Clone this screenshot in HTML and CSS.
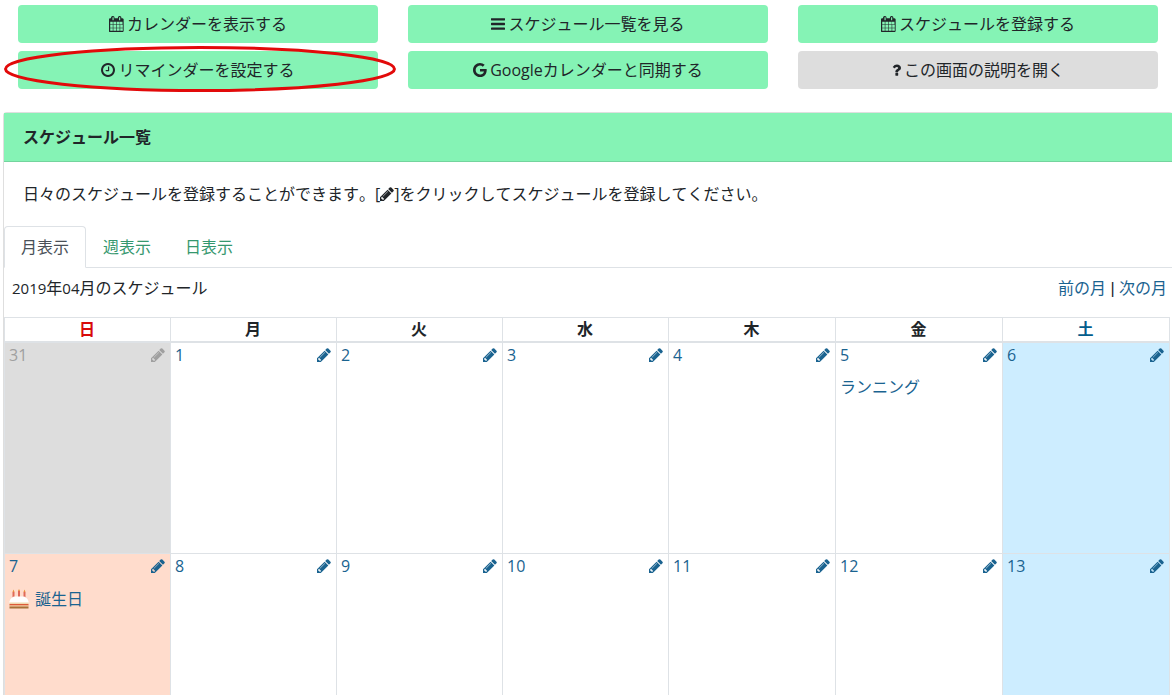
FILE: index.html
```html
<!DOCTYPE html>
<html lang="ja">
<head>
<meta charset="utf-8">
<title>スケジュール一覧</title>
<link rel="stylesheet" href="styles.css">
</head>
<body>
<svg class="defs" width="0" height="0" aria-hidden="true">
  <symbol id="i-cal" viewBox="0 0 1664 1792"><path d="M128 1664h288v-288h-288v288zm352 0h320v-288h-320v288zm-352-352h288v-320h-288v320zm352 0h320v-320h-320v320zm-352-384h288v-288h-288v288zm736 736h320v-288h-320v288zm-384-736h320v-288h-320v288zm768 736h288v-288h-288v288zm-384-352h320v-320h-320v320zm-352-864v-288q0-13-9.500-22.500t-22.500-9.500h-64q-13 0-22.500 9.500t-9.500 22.500v288q0 13 9.500 22.500t22.500 9.500h64q13 0 22.500-9.500t9.500-22.500zm736 864h288v-320h-288v320zm-384-384h320v-288h-320v288zm352 0h288v-288h-288v288zm32-480v-288q0-13-9.500-22.500t-22.500-9.500h-64q-13 0-22.500 9.500t-9.500 22.500v288q0 13 9.500 22.500t22.500 9.500h64q13 0 22.500-9.500t9.500-22.500zm384-64v1280q0 52-38 90t-90 38h-1408q-52 0-90-38t-38-90v-1280q0-52 38-90t90-38h128v-96q0-66 47-113t113-47h64q66 0 113 47t47 113v96h384v-96q0-66 47-113t113-47h64q66 0 113 47t47 113v96h128q52 0 90 38t38 90z"/></symbol>
  <symbol id="i-bars" viewBox="128 256 1536 1280"><path d="M1664 1344v128q0 26-19 45t-45 19h-1408q-26 0-45-19t-19-45v-128q0-26 19-45t45-19h1408q26 0 45 19t19 45zm0-512v128q0 26-19 45t-45 19h-1408q-26 0-45-19t-19-45v-128q0-26 19-45t45-19h1408q26 0 45 19t19 45zm0-512v128q0 26-19 45t-45 19h-1408q-26 0-45-19t-19-45v-128q0-26 19-45t45-19h1408q26 0 45 19t19 45z"/></symbol>
  <symbol id="i-clock" viewBox="128 128 1536 1536"><path d="M1024 544v448q0 14-9 23t-23 9h-320q-14 0-23-9t-9-23v-64q0-14 9-23t23-9h224v-352q0-14 9-23t23-9h64q14 0 23 9t9 23zm416 352q0-148-73-273t-198-198-273-73-273 73-198 198-73 273 73 273 198 198 273 73 273-73 198-198 73-273zm224 0q0 209-103 385.500t-279.500 279.500-385.500 103-385.500-103-279.500-279.500-103-385.500 103-385.500 279.500-279.500 385.500-103 385.500 103 279.500 279.500 103 385.500z"/></symbol>
  <symbol id="i-g" viewBox="128 128 1536 1536"><path d="M896 786h725q12 67 12 128 0 217-91 387.500t-259.500 266.500-386.500 96q-157 0-299-60.500t-245-163.500-163.500-245-60.500-299 60.500-299 163.500-245 245-163.500 299-60.500q300 0 515 201l-209 201q-123-119-306-119-129 0-238.500 65t-173.500 176.500-64 243.500 64 243.500 173.500 176.500 238.500 65q87 0 160-24t120-60 82-82 51.500-87 22.500-78h-436v-264z"/></symbol>
  <symbol id="i-q" viewBox="384 256 1024 1280"><path d="M1088 1256v240q0 16-12 28t-28 12h-240q-16 0-28-12t-12-28v-240q0-16 12-28t28-12h240q16 0 28 12t12 28zm316-600q0 54-15.500 101t-35 76.500-55 59.500-57.500 43.500-61 35.500q-41 23-68.500 65t-27.500 67q0 17-12 32.500t-28 15.500h-240q-15 0-25.500-18.500t-10.500-37.500v-45q0-83 65-156.500t143-108.500q59-27 84-56t25-76q0-42-46.500-74t-107.500-32q-65 0-108 29-35 25-107 115-13 16-31 16-12 0-25-8l-164-125q-13-10-15.500-25t5.500-28q160-266 464-266 80 0 161 31t146 83 106 127.500 41 158.500z"/></symbol>
  <symbol id="i-pen" viewBox="128 128 1536 1536"><path d="M491 1536l91-91-235-235-91 91v107h128v128h107zm523-928q0-22-22-22-10 0-17 7l-542 542q-7 7-7 17 0 22 22 22 10 0 17-7l542-542q7-7 7-17zm-54-192l416 416-832 832h-416v-416zm683 96q0 53-37 90l-166 166-416-416 166-165q36-38 90-38 53 0 91 38l235 234q37 39 37 91z"/></symbol>
</svg>

<nav class="actions">
  <a class="btn"><svg class="ic ic-cal"><use href="#i-cal"/></svg>カレンダーを表示する</a>
  <a class="btn"><svg class="ic ic-bars"><use href="#i-bars"/></svg>スケジュール一覧を見る</a>
  <a class="btn"><svg class="ic ic-cal"><use href="#i-cal"/></svg>スケジュールを登録する</a>
  <a class="btn btn-circled"><svg class="ic ic-clock"><use href="#i-clock"/></svg>リマインダーを設定する
    <svg class="circle" viewBox="0 0 394 50" aria-hidden="true"><ellipse cx="197" cy="24" rx="194.500" ry="21.500"/></svg>
  </a>
  <a class="btn"><svg class="ic ic-g"><use href="#i-g"/></svg>Googleカレンダーと同期する</a>
  <a class="btn btn-gray"><svg class="ic ic-q"><use href="#i-q"/></svg>この画面の説明を開く</a>
</nav>

<section class="card">
  <h2 class="card-head">スケジュール一覧</h2>
  <p class="lead">日々のスケジュールを登録することができます。[<svg class="pen-dark"><use href="#i-pen"/></svg>]をクリックしてスケジュールを登録してください。</p>
  <ul class="tabs">
    <li class="tab tab-active">月表示</li>
    <li class="tab">週表示</li>
    <li class="tab">日表示</li>
  </ul>
  <div class="month-bar">
    <span><span class="num">2019</span>年<span class="num">04</span>月のスケジュール</span>
    <span><a class="link">前の月</a><span class="sep"> | </span><a class="link">次の月</a></span>
  </div>
  <table class="cal">
    <colgroup>
      <col class="col-s"><col class="col-s"><col class="col-s"><col class="col-s"><col class="col-l"><col class="col-l"><col class="col-l">
    </colgroup>
    <thead>
      <tr>
        <th class="sun">日</th><th>月</th><th>火</th><th>水</th><th>木</th><th>金</th><th class="sat">土</th>
      </tr>
    </thead>
    <tbody>
      <tr>
        <td class="other"><div class="day"><span>31</span><svg class="pen"><use href="#i-pen"/></svg></div></td>
        <td><div class="day"><span>1</span><svg class="pen"><use href="#i-pen"/></svg></div></td>
        <td><div class="day"><span>2</span><svg class="pen"><use href="#i-pen"/></svg></div></td>
        <td><div class="day"><span>3</span><svg class="pen"><use href="#i-pen"/></svg></div></td>
        <td><div class="day"><span>4</span><svg class="pen"><use href="#i-pen"/></svg></div></td>
        <td><div class="day"><span>5</span><svg class="pen"><use href="#i-pen"/></svg></div><div class="event">ランニング</div></td>
        <td class="blue"><div class="day"><span>6</span><svg class="pen"><use href="#i-pen"/></svg></div></td>
      </tr>
      <tr>
        <td class="pink"><div class="day"><span>7</span><svg class="pen"><use href="#i-pen"/></svg></div>
          <div class="event event-cake"><svg class="cake" viewBox="0 0 20 20" aria-hidden="true">
            <rect x="3.500" y="3" width="2" height="6" fill="#e06a58"/><rect x="9" y="2" width="2" height="7" fill="#e06a58"/><rect x="14.500" y="3" width="2" height="6" fill="#e06a58"/>
            <path d="M4.500 .5l1 2.500h-2zM10 0l1 2h-2zM15.500 .5l1 2.500h-2z" fill="#e8913a"/>
            <path d="M.5 12.500C1 9.500 3.500 7.500 6 7.500h8c2.500 0 5 2 5.500 5v1.500H.5z" fill="#fff"/>
            <rect x=".5" y="13.500" width="19" height="1.500" fill="#f0d8b0"/>
            <rect x=".5" y="15" width="19" height="1.500" fill="#dc5a3a"/>
            <rect x=".5" y="16.500" width="19" height="1" fill="#eec48c"/>
            <rect x=".5" y="17.500" width="19" height="2" fill="#a87038"/>
          </svg>誕生日</div></td>
        <td><div class="day"><span>8</span><svg class="pen"><use href="#i-pen"/></svg></div></td>
        <td><div class="day"><span>9</span><svg class="pen"><use href="#i-pen"/></svg></div></td>
        <td><div class="day"><span>10</span><svg class="pen"><use href="#i-pen"/></svg></div></td>
        <td><div class="day"><span>11</span><svg class="pen"><use href="#i-pen"/></svg></div></td>
        <td><div class="day"><span>12</span><svg class="pen"><use href="#i-pen"/></svg></div></td>
        <td class="blue"><div class="day"><span>13</span><svg class="pen"><use href="#i-pen"/></svg></div></td>
      </tr>
    </tbody>
  </table>
</section>
</body>
</html>
```
FILE: styles.css
```css
* { box-sizing: border-box; }
html, body { height: 100%; overflow: hidden; }
body {
  margin: 0;
  background: #fff;
  color: #212529;
  font-family: "Open Sans", "Noto Sans CJK JP", sans-serif;
  font-size: 16px;
  line-height: 24px;
  font-kerning: none;
  text-spacing-trim: space-all;
}
.defs { position: absolute; }

.actions {
  display: grid;
  grid-template-columns: repeat(3, 360px);
  grid-auto-rows: 38px;
  gap: 8px 30px;
  padding: 5px 0 0 18px;
}
.btn {
  position: relative;
  display: flex;
  align-items: center;
  justify-content: center;
  background: #85f3b5;
  border-radius: 4px;
  color: #212529;
}
.btn-gray { background: #dddddd; }
.ic { fill: #212529; margin-right: 3px; flex: none; }
.ic-cal { width: 15px; height: 16px; }
.ic-bars { width: 14px; height: 12px; }
.ic-clock { width: 14px; height: 14px; }
.ic-g { width: 14px; height: 14px; }
.ic-q { width: 9px; height: 12px; }
.circle {
  position: absolute;
  left: -15px;
  top: -6px;
  width: 394px;
  height: 50px;
  overflow: visible;
}
.circle ellipse { fill: none; stroke: #e20a0a; stroke-width: 3; }

.card {
  width: 1170px;
  margin: 23px 0 0 3px;
  border: 1px solid rgba(0, 0, 0, .125);
  border-right: 0;
  border-radius: 4px 4px 0 0;
}
.card-head {
  margin: 0;
  height: 49px;
  padding: 12px 19px;
  background: #85f3b5;
  border-bottom: 1px solid rgba(0, 0, 0, .125);
  font-size: 16px;
  line-height: 24px;
  font-weight: 700;
}
.lead { margin: 0; padding: 20px 19px 0; height: 64px; }
.pen-dark { width: 14px; height: 16px; fill: #212529; vertical-align: -2px; }

.tabs {
  display: flex;
  list-style: none;
  margin: 0;
  padding: 0;
  height: 42px;
  border-bottom: 1px solid #dee2e6;
}
.tab {
  height: 42px;
  padding: 8px 16px;
  border: 1px solid transparent;
  color: #35976e;
}
.tab-active {
  color: #495057;
  background: #fff;
  border-color: #dee2e6 #dee2e6 #fff;
  border-radius: 4px 4px 0 0;
}
.month-bar {
  display: flex;
  justify-content: space-between;
  height: 49px;
  padding: 8px 6px 0 8px;
}
.num { font-size: 15px; }
.link { color: #1a6390; }
.sep { font-family: "Liberation Sans", sans-serif; white-space: pre; }

.cal {
  table-layout: fixed;
  width: 1166px;
  border-collapse: collapse;
}
.col-s { width: 166px; }
.col-l { width: 167px; }
.cal th, .cal td { border: 1px solid #dee2e6; padding: 0 5px 0 4px; vertical-align: top; }
.cal th { height: 24px; font-weight: 700; text-align: center; border-bottom-width: 2px; line-height: 22px; }
.cal td { height: 212px; color: #1a6390; }
.cal .sun { color: #d80b0b; }
.cal .sat { color: #035d8c; }
.cal .other { background: #dddddd; color: #a0a0a0; }
.cal .other .pen { fill: #a0a0a0; }
.cal .blue { background: #cdedff; }
.cal .pink { background: #ffdccc; }
.day { display: flex; justify-content: space-between; align-items: center; }
.pen { width: 14px; height: 14px; fill: #1a6390; }
.event { margin-top: 8px; display: flex; align-items: center; gap: 5px; }
.event-cake { margin-top: 9px; gap: 6px; }
.cake { width: 20px; height: 20px; }
```
